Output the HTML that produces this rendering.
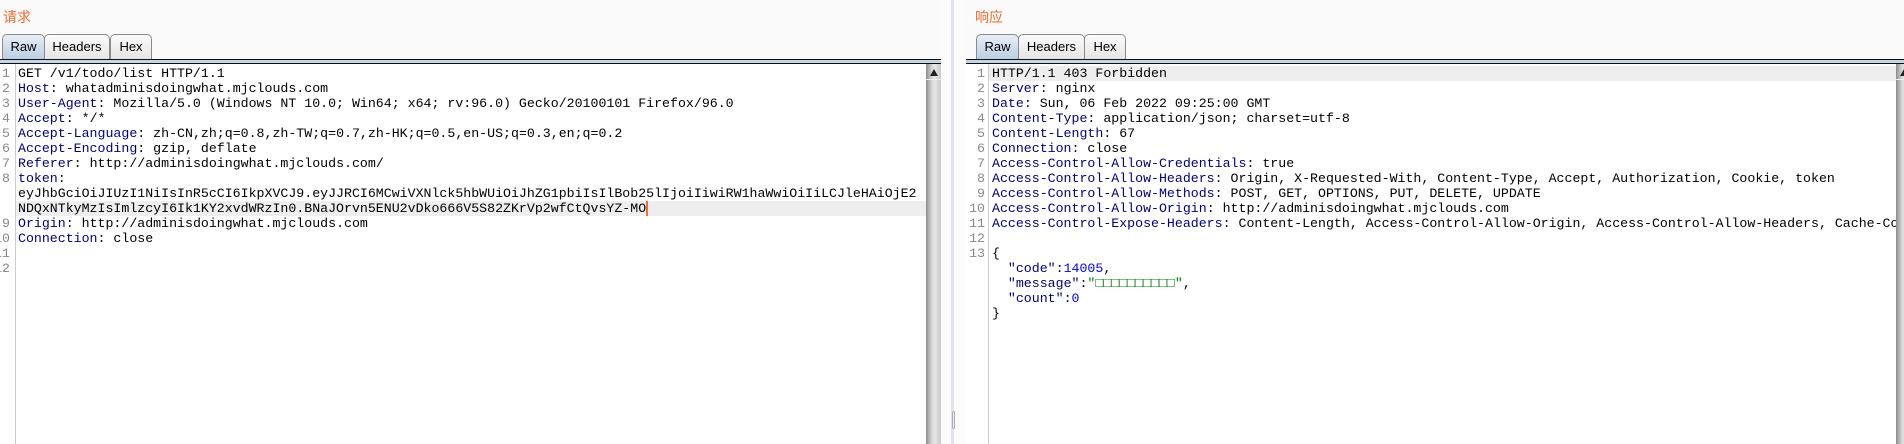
<!DOCTYPE html>
<html><head><meta charset="utf-8"><style>
*{margin:0;padding:0;box-sizing:border-box}
body{width:1904px;height:444px;background:#fafafa;position:relative;overflow:hidden;font-family:"Liberation Mono","DejaVu Sans Mono",monospace}
.title{position:absolute;top:7px;font:14px "Liberation Sans","Noto Sans CJK SC",sans-serif;color:#f26b2d}
.tab{position:absolute;top:34px;height:26px;border:1px solid #8a8a8a;border-bottom:none;border-radius:5px 5px 0 0;background:linear-gradient(#fbfbfb,#e4e4e4);font:13px "Liberation Sans",sans-serif;color:#000;text-align:center;line-height:24px}
.tab.sel{background:linear-gradient(#e6eef6,#b9cde0)}
.bar{position:absolute;top:59px;height:5px;border-top:1.5px solid #111;border-bottom:1.5px solid #111;background:#c3d6e6}
.area{position:absolute;top:64px;bottom:0;background:#fff}
.gut{position:absolute;top:64px;bottom:0;border-right:1px solid #ccc;background:#fff}
.l{position:absolute;font-size:13.25px;line-height:15px;white-space:pre;color:#000}
.n{position:absolute;font-size:13.25px;line-height:15px;color:#888;text-align:right}
.k{color:#000080}.b{color:#0000ff}.g{color:#008000}
.hl{position:absolute;height:15px;background:#eeeeee}
.sb{position:absolute;top:64px;bottom:0;width:15px;background:linear-gradient(90deg,#8c8c8c,#d8d8d8 40%,#e6e6e6 60%,#c8c8c8)}
.sb:before{content:"";position:absolute;left:4px;top:5px;border-left:4px solid transparent;border-right:4px solid transparent;border-bottom:7px solid #222}
.sb:after{content:"";position:absolute;left:0;right:0;top:15px;height:1px;background:#eee}
</style></head><body>
<div class="title" style="left:3px">请求</div>
<div class="title" style="left:975px">响应</div>

<div class="tab sel" style="left:2px;width:43px">Raw</div>
<div class="tab" style="left:44px;width:66px">Headers</div>
<div class="tab" style="left:110px;width:42px">Hex</div>
<div class="bar" style="left:0;width:941px"></div>

<div class="tab sel" style="left:976px;width:43px">Raw</div>
<div class="tab" style="left:1018px;width:67px">Headers</div>
<div class="tab" style="left:1084px;width:42px">Hex</div>
<div class="bar" style="left:966px;width:938px"></div>

<!-- left panel -->
<div class="area" style="left:0;width:926px"></div>
<div class="gut" style="left:0;width:16px"></div>
<div class="hl" style="left:16px;width:910px;top:201px"></div>
<div class="sb" style="left:926px"></div>
<div style="position:absolute;left:941px;top:0;bottom:0;width:25px;background:#fbfbfb"></div>
<div style="position:absolute;left:951px;top:0;bottom:0;width:3px;background:#e2e2ea"></div>
<div style="position:absolute;left:952px;top:411px;width:3px;height:18px;border:1px solid #aab;border-radius:2px;background:#eef"></div>
<div style="position:absolute;left:985px;top:64px;bottom:0;width:1px;background:#ddd"></div>

<div class="n" style="left:-10px;width:20px;top:66px;line-height:15px">1<br>2<br>3<br>4<br>5<br>6<br>7<br>8<br><br><br>9<br>10<br>11<br>12</div>
<div class="l" style="left:18px;top:66px">GET /v1/todo/list HTTP/1.1
<span class="k">Host</span>: whatadminisdoingwhat.mjclouds.com
<span class="k">User-Agent</span>: Mozilla/5.0 (Windows NT 10.0; Win64; x64; rv:96.0) Gecko/20100101 Firefox/96.0
<span class="k">Accept</span>: */*
<span class="k">Accept-Language</span>: zh-CN,zh;q=0.8,zh-TW;q=0.7,zh-HK;q=0.5,en-US;q=0.3,en;q=0.2
<span class="k">Accept-Encoding</span>: gzip, deflate
<span class="k">Referer</span>: http://adminisdoingwhat.mjclouds.com/
<span class="k">token</span>:
eyJhbGciOiJIUzI1NiIsInR5cCI6IkpXVCJ9.eyJJRCI6MCwiVXNlck5hbWUiOiJhZG1pbiIsIlBob25lIjoiIiwiRW1haWwiOiIiLCJleHAiOjE2
NDQxNTkyMzIsImlzcyI6Ik1KY2xvdWRzIn0.BNaJOrvn5ENU2vDko666V5S82ZKrVp2wfCtQvsYZ-MO<span style="border-left:2px solid #f26b2d"></span>
<span class="k">Origin</span>: http://adminisdoingwhat.mjclouds.com
<span class="k">Connection</span>: close</div>

<!-- right panel -->
<div class="area" style="left:966px;width:930px"></div>
<div class="gut" style="left:966px;width:23px"></div>
<div class="hl" style="left:989px;width:907px;top:66px"></div>
<div class="sb" style="left:1896px"></div>
<div class="n" style="left:960px;width:25px;top:66px">1<br>2<br>3<br>4<br>5<br>6<br>7<br>8<br>9<br>10<br>11<br>12<br>13</div>
<div class="l" style="left:992px;top:66px;width:904px;overflow:hidden">HTTP/1.1 403 Forbidden
<span class="k">Server</span>: nginx
<span class="k">Date</span>: Sun, 06 Feb 2022 09:25:00 GMT
<span class="k">Content-Type</span>: application/json; charset=utf-8
<span class="k">Content-Length</span>: 67
<span class="k">Connection</span>: close
<span class="k">Access-Control-Allow-Credentials</span>: true
<span class="k">Access-Control-Allow-Headers</span>: Origin, X-Requested-With, Content-Type, Accept, Authorization, Cookie, token
<span class="k">Access-Control-Allow-Methods</span>: POST, GET, OPTIONS, PUT, DELETE, UPDATE
<span class="k">Access-Control-Allow-Origin</span>: http://adminisdoingwhat.mjclouds.com
<span class="k">Access-Control-Expose-Headers</span>: Content-Length, Access-Control-Allow-Origin, Access-Control-Allow-Headers, Cache-Control

{
  <span class="k">"code"</span>:<span class="b">14005</span>,
  <span class="k">"message"</span>:<span class="g">"□□□□□□□□□□"</span>,
  <span class="k">"count"</span>:<span class="b">0</span>
}</div>
</body></html>
